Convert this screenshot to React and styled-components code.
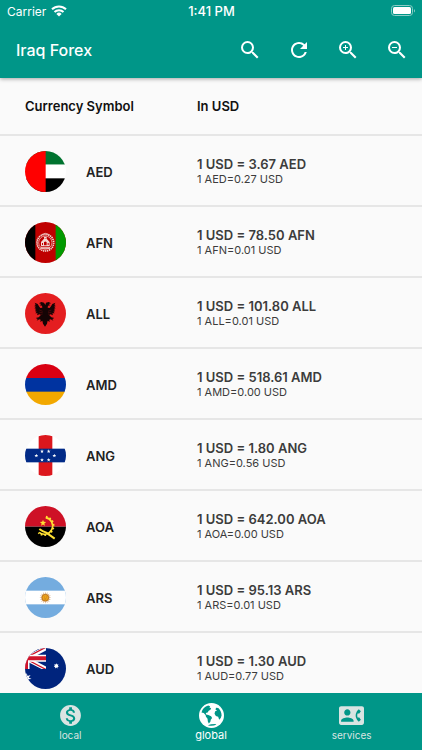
import React, { useState } from "react";
import styled, { createGlobalStyle } from "styled-components";
import {
  MdSearch,
  MdRefresh,
  MdZoomIn,
  MdZoomOut,
  MdMonetizationOn,
  MdContactPhone,
} from "react-icons/md";

const GlobalStyle = createGlobalStyle`
  * {
    box-sizing: border-box;
  }
  body {
    margin: 0;
    background: #fafafa;
    font-family: Inter, "Liberation Sans", sans-serif;
  }
`;

const Screen = styled.div`
  height: 100vh;
  display: flex;
  flex-direction: column;
`;

const Header = styled.header`
  flex: none;
  background: #009688;
  color: #fff;
  box-shadow: 0 1px 4px rgba(0, 0, 0, 0.35);
  z-index: 1;
`;

const StatusBar = styled.div`
  height: 22px;
  padding: 0 6px 0 7px;
  display: grid;
  grid-template-columns: 1fr auto 1fr;
  align-items: center;
  font-size: 12px;
`;

const Carrier = styled.span`
  display: flex;
  align-items: center;
  gap: 5px;
`;

const Clock = styled.span`
  font-size: 13px;
  font-weight: 500;
`;

const Battery = styled.svg`
  justify-self: end;
`;

const AppBar = styled.div`
  height: 56px;
  padding: 0 1px 0 16px;
  display: flex;
  align-items: center;
  justify-content: space-between;
`;

const Title = styled.h1`
  margin: 0;
  font-size: 16px;
  font-weight: 500;
`;

const Actions = styled.div`
  display: flex;
`;

const IconButton = styled.button`
  width: 49px;
  height: 48px;
  padding: 0;
  border: 0;
  background: none;
  color: inherit;
  font-size: 24px;
  display: grid;
  place-items: center;
  cursor: pointer;
`;

const Content = styled.main`
  flex: 1;
  min-height: 0;
  overflow-y: auto;
  scrollbar-width: none;
`;

const RateTable = styled.table`
  width: 100%;
  border-collapse: separate;
  border-spacing: 0;
  table-layout: fixed;
  text-align: left;
`;

const HeadCell = styled.th`
  height: 58px;
  width: ${({ $wide }) => ($wide ? "auto" : "197px")};
  padding: 0 0 0 ${({ $wide }) => ($wide ? "0" : "25px")};
  border-bottom: 2px solid #e6e6e6;
  font-size: 13px;
  font-weight: 600;
  color: #111;
`;

const Cell = styled.td`
  height: 71px;
  padding: 2px 0 0 ${({ $first }) => ($first ? "25px" : "0")};
  border-bottom: 2px solid #e6e6e6;
  color: #3c3c3c;
`;

const Currency = styled.div`
  display: flex;
  align-items: center;
  gap: 20px;
  font-size: 13px;
  font-weight: 600;
  color: #222;
`;

const FlagCircle = styled.svg`
  width: 41px;
  height: 41px;
  border-radius: 50%;
`;

const Rate = styled.div`
  font-size: 13px;
  line-height: 15px;
  font-weight: 600;
`;

const Inverse = styled.div`
  font-size: 11px;
  line-height: 14px;
`;

const BottomNav = styled.nav`
  flex: none;
  height: 57px;
  display: flex;
  background: #009688;
`;

const NavItem = styled.a`
  flex: 1;
  display: flex;
  flex-direction: column;
  align-items: center;
  padding-top: 10px;
  text-decoration: none;
  font-size: ${({ $active }) => ($active ? "11px" : "10px")};
  line-height: 14px;
  color: ${({ $active }) => ($active ? "#fff" : "#d9e4e2")};

  svg {
    width: 25px;
    height: 25px;
  }
`;

const starPoints = (cx, cy, r, spikes = 5, inner = 0.42) =>
  Array.from({ length: spikes * 2 }, (_, i) => {
    const radius = i % 2 ? r * inner : r;
    const angle = (Math.PI * i) / spikes - Math.PI / 2;
    return `${cx + radius * Math.cos(angle)},${cy + radius * Math.sin(angle)}`;
  }).join(" ");

const Star = ({ x, y, r, spikes, inner, fill }) => (
  <polygon points={starPoints(x, y, r, spikes, inner)} fill={fill} />
);

const flags = {
  AED: (
    <>
      <rect width="123" height="41" fill="#00732f" />
      <rect y="41" width="123" height="41" fill="#fff" />
      <rect y="82" width="123" height="41" fill="#000" />
      <rect width="62" height="123" fill="#f00" />
    </>
  ),
  AFN: (
    <>
      <rect width="123" height="123" fill="#bf0000" />
      <rect width="31" height="123" fill="#000" />
      <rect x="92" width="31" height="123" fill="#009900" />
      <g fill="none" stroke="#f3d9d3">
        <circle cx="61" cy="62" r="25" strokeWidth="5" strokeDasharray="4 2" />
        <circle cx="61" cy="62" r="20" strokeWidth="2" />
        <path d="M49 38q12-8 24 0" strokeWidth="2" />
      </g>
      <path d="M48 73V60l5-5q8-13 16 0l5 5v13zM57 50h8v-6h-8z" fill="#f3d9d3" />
      <path d="M57 70v-9q4-5 8 0v9zM51 63h3v6h-3zM68 63h3v6h-3z" fill="#bf0000" />
      <path d="M47 76h28v4H47z" fill="#f3d9d3" />
    </>
  ),
  ALL: (
    <>
      <rect width="123" height="123" fill="#e41e20" />
      <path
        d="M61 36l-4-7-8-2-7 4 7 2-5 4 7 1 1 6-6 1-4-5-4-7-9-4 3 6-4 1 5 4-5 1 5 5-5 1 6 4-5 3 6 2-4 5 7 0-2 6 8-3 3 3-6 6-9 2 6 3-3 5 8-4 4 1-1 7 6-4 2 9 6 9 6-9 2-9 6 4-1-7 4-1 8 4-3-5 6-3-9-2-6-6 3-3 8 3-2-6 7 0-4-5 6-2-5-3 6-4-5-1 5-5-5-1 5-4-4-1 3-6-9 4-4 7-4 5-6-1 1-6 7-1-5-4 7-2-7-4-8 2z"
        fill="#150405"
      />
      <path d="M43 51l10 4M43 58l10 1M43 65l10-2M79 51l-10 4M79 58l-10 1M79 65l-10-2" stroke="#a01517" />
    </>
  ),
  AMD: (
    <>
      <rect width="123" height="42" fill="#d90012" />
      <rect y="42" width="123" height="42" fill="#0033a0" />
      <rect y="83" width="123" height="41" fill="#f2a800" />
    </>
  ),
  ANG: (
    <>
      <rect width="123" height="123" fill="#fff" />
      <rect x="41" width="41" height="123" fill="#dc171d" />
      <rect y="41" width="123" height="41" fill="#012a87" />
      <Star x={34} y={62} r={6} fill="#fff" />
      <Star x={51} y={49} r={6} fill="#fff" />
      <Star x={71} y={49} r={6} fill="#fff" />
      <Star x={88} y={62} r={6} fill="#fff" />
      <Star x={51} y={75} r={6} fill="#fff" />
      <Star x={71} y={75} r={6} fill="#fff" />
    </>
  ),
  AOA: (
    <>
      <rect width="123" height="62" fill="#ce1126" />
      <rect y="62" width="123" height="61" fill="#000" />
      <g fill="none" stroke="#ffe033">
        <path d="M62 35a25 25 0 1 1-20 44" strokeWidth="5" />
        <path d="M63 32a28 28 0 1 1-23 49" strokeWidth="5" strokeDasharray="5 6" />
        <path d="M43 69q9 7 21 11l25 18" strokeWidth="6" />
      </g>
      <Star x={54} y={51} r={10} fill="#ffe033" />
    </>
  ),
  ARS: (
    <>
      <rect width="123" height="123" fill="#74acdf" />
      <rect y="41" width="123" height="41" fill="#fff" />
      <Star x={61} y={62} r={18} spikes={16} inner={0.6} fill="#dfb182" />
      <circle cx="61" cy="62" r="10" fill="#eda21a" stroke="#a8641c" strokeWidth="2" />
      <path d="M57 60h2M63 60h2M58 66h6" stroke="#a8641c" strokeWidth="2" />
    </>
  ),
  AUD: (
    <>
      <rect width="123" height="123" fill="#00247d" />
      <svg width="63" height="63" viewBox="0 0 63 63">
        <path d="M-60-1L66 64M-60 64L66-1" stroke="#fff" strokeWidth="13" />
        <path d="M3 33L66 66M3 29L66-4" stroke="#cf142b" strokeWidth="4" />
        <path d="M0 31H63M3 0V63" stroke="#fff" strokeWidth="21" />
        <path d="M0 31H63M3 0V63" stroke="#cf142b" strokeWidth="12" />
      </svg>
      <Star x={5} y={90} r={15} spikes={7} fill="#fff" />
      <Star x={94} y={54} r={8} spikes={7} inner={0.6} fill="#fff" />
    </>
  ),
};

const rates = [
  { code: "AED", rate: "3.67", inverse: "0.27" },
  { code: "AFN", rate: "78.50", inverse: "0.01" },
  { code: "ALL", rate: "101.80", inverse: "0.01" },
  { code: "AMD", rate: "518.61", inverse: "0.00" },
  { code: "ANG", rate: "1.80", inverse: "0.56" },
  { code: "AOA", rate: "642.00", inverse: "0.00" },
  { code: "ARS", rate: "95.13", inverse: "0.01" },
  { code: "AUD", rate: "1.30", inverse: "0.77" },
];

const GlobeIcon = () => (
  <svg viewBox="0 0 24 24" aria-hidden="true">
    <circle cx="12" cy="12" r="12" fill="#fff" />
    <g fill="#009688">
      <path d="M2.4 9.2C3.2 5.9 5.6 3.4 8.8 2.5L10.6 3l-.5 1.6 1.5.3-.6 1.6-1.7 1-1 1.7-1.8.3.4 1.6 2.1.5 2.6 1.2 1 1.5-1.3 1.7-.4 2-1.5 1.6-.9-1.8-.3-2.7L6.7 13.3 6.3 11.4 4.5 9.7z" />
      <path d="M16.3 4.5l2.2.3c1.9 1.7 3.2 4.3 3.2 7.2l-.8 2.5-1.5 1.5-1-2.8-2.2-.8-1.3-2.1.6-2.3 1.9-.6-1.5-1z" />
      <path d="M8.5 21.3l3-.9 4.2-.2 1 .5c-2.500 1.300-5.500 1.500-8.200.6z" />
    </g>
  </svg>
);

const WifiIcon = () => (
  <svg width="16" height="12" viewBox="0 0 16 12" aria-hidden="true">
    <g fill="none" stroke="#fff" strokeWidth="2">
      <path d="M1 4.3a10 10 0 0 1 14 0" />
      <path d="M3.5 7a6.4 6.4 0 0 1 9 0" />
    </g>
    <path d="M8 11.5L5.4 8.9a3.7 3.7 0 0 1 5.200 0z" fill="#fff" />
  </svg>
);

const tabs = [
  { id: "local", Icon: MdMonetizationOn },
  { id: "global", Icon: GlobeIcon },
  { id: "services", Icon: MdContactPhone },
];

const App = () => {
  const [tab, setTab] = useState("global");

  return (
    <Screen>
      <GlobalStyle />
      <Header>
        <StatusBar>
          <Carrier>
            Carrier
            <WifiIcon />
          </Carrier>
          <Clock>1:41 PM</Clock>
          <Battery width="25" height="12" viewBox="0 0 25 12" aria-hidden="true">
            <rect x="0.5" y="0.5" width="21" height="10" rx="3" fill="none" stroke="#8ccdc6" />
            <rect x="2" y="2" width="18" height="7" rx="1.5" fill="#fff" />
            <path d="M23 4v3.5q2-1.700 0-3.500z" fill="#8ccdc6" />
          </Battery>
        </StatusBar>
        <AppBar>
          <Title>Iraq Forex</Title>
          <Actions>
            <IconButton aria-label="Search">
              <MdSearch />
            </IconButton>
            <IconButton aria-label="Refresh">
              <MdRefresh />
            </IconButton>
            <IconButton aria-label="Zoom in">
              <MdZoomIn />
            </IconButton>
            <IconButton aria-label="Zoom out">
              <MdZoomOut />
            </IconButton>
          </Actions>
        </AppBar>
      </Header>

      <Content>
        <RateTable>
          <thead>
            <tr>
              <HeadCell>Currency Symbol</HeadCell>
              <HeadCell $wide>In USD</HeadCell>
            </tr>
          </thead>
          <tbody>
            {rates.map(({ code, rate, inverse }) => (
              <tr key={code}>
                <Cell $first>
                  <Currency>
                    <FlagCircle viewBox="0 0 123 123" aria-hidden="true">
                      {flags[code]}
                    </FlagCircle>
                    {code}
                  </Currency>
                </Cell>
                <Cell>
                  <Rate>
                    1 USD = {rate} {code}
                  </Rate>
                  <Inverse>
                    1 {code}={inverse} USD
                  </Inverse>
                </Cell>
              </tr>
            ))}
          </tbody>
        </RateTable>
      </Content>

      <BottomNav>
        {tabs.map(({ id, Icon }) => (
          <NavItem
            key={id}
            href={`#${id}`}
            $active={tab === id}
            onClick={() => setTab(id)}
          >
            <Icon />
            {id}
          </NavItem>
        ))}
      </BottomNav>
    </Screen>
  );
};

export default App;
